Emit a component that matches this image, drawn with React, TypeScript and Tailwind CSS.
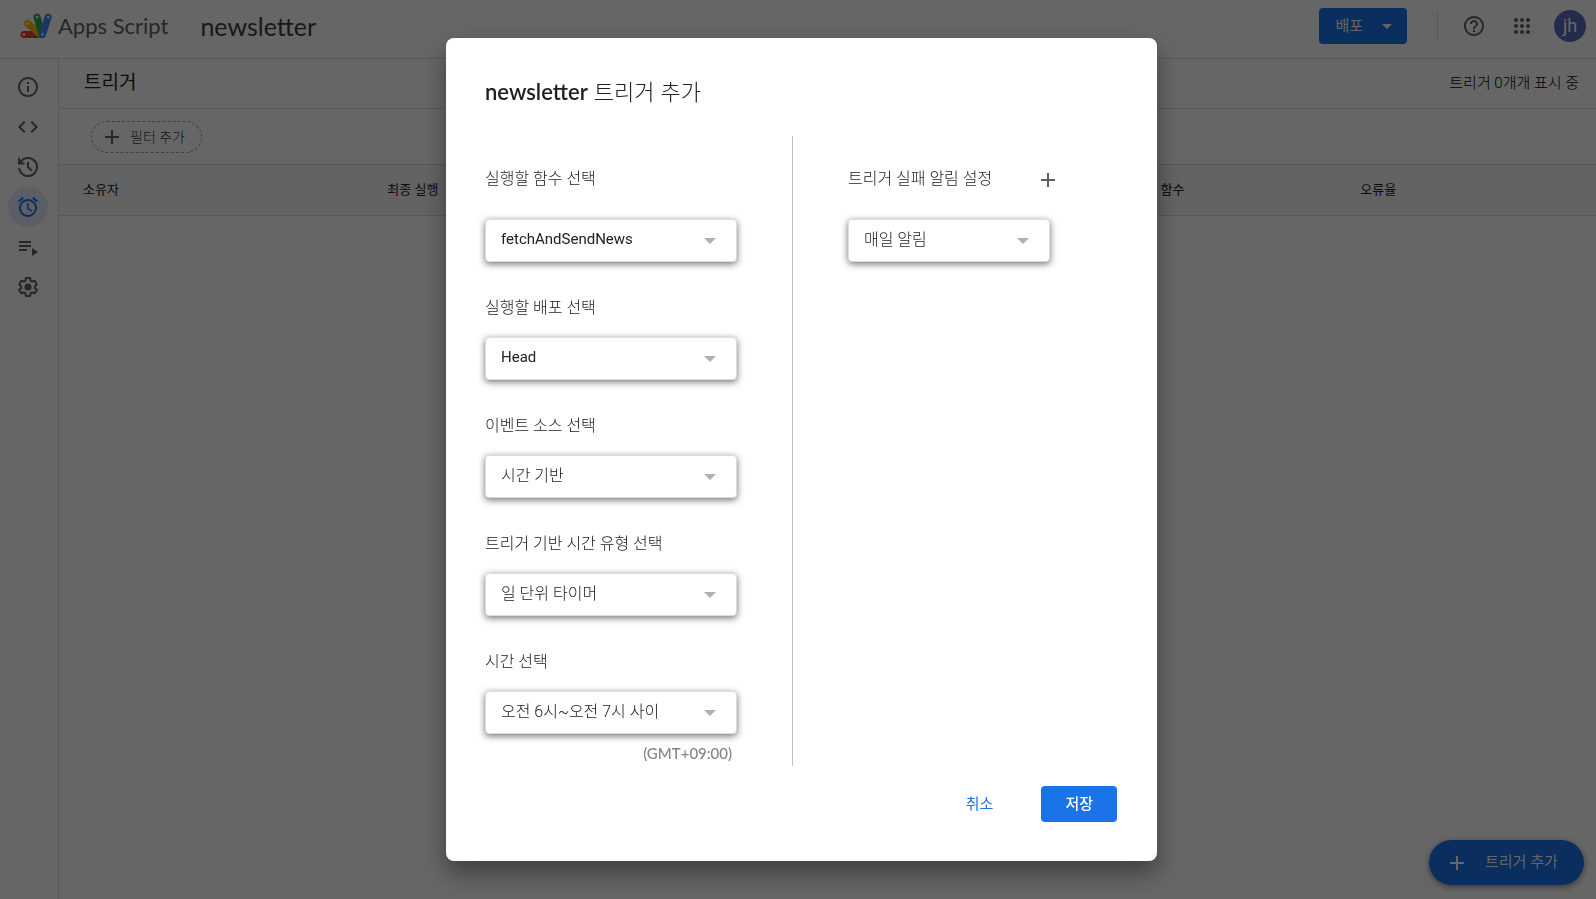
import React from 'react';
import {
  MdAdd,
  MdAlarm,
  MdArrowDropDown,
  MdCode,
  MdHelpOutline,
  MdInfoOutline,
} from 'react-icons/md';

interface SelectBoxProps {
  id: string;
  value: string;
  latin?: boolean;
}

interface SelectFieldProps extends SelectBoxProps {
  label: string;
}

const HistoryIcon: React.FC = () => (
  <svg viewBox="0 0 24 24" className="size-6" fill="none" stroke="currentColor" strokeWidth="2">
    <path d="M3.1 13.2A9 9 0 1 0 4.6 6.9" />
    <path d="M3 3v5.5h5.5" />
    <path d="M12 7v5.2l4 3.6" />
    <path d="M3 8.5 6 5.6" />
  </svg>
);

const ExecutionsIcon: React.FC = () => (
  <svg viewBox="0 0 24 24" className="size-6" fill="currentColor">
    <path d="M3 6h12v2H3zM3 10h12v2H3zM3 14h8v2H3zM16 13v8l6-4z" />
  </svg>
);

const SettingsIcon: React.FC = () => (
  <svg viewBox="0 0 24 24" className="size-6" fill="none" stroke="currentColor" strokeWidth="2.2">
    <path
      transform="translate(1.2 1.2) scale(0.9)"
      d="M19.43 12.98c.04-.32.07-.64.07-.98 0-.34-.03-.66-.07-.98l2.11-1.65c.19-.15.24-.42.12-.64l-2-3.46a.5.5 0 0 0-.61-.22l-2.49 1c-.52-.4-1.08-.73-1.69-.98l-.38-2.65A.488.488 0 0 0 14 2h-4c-.25 0-.46.18-.49.42l-.38 2.65c-.61.25-1.17.59-1.69.98l-2.49-1a.5.5 0 0 0-.61.22l-2 3.46c-.13.22-.07.49.12.64l2.11 1.65c-.04.32-.07.65-.07.98 0 .33.03.66.07.98l-2.11 1.65c-.19.15-.24.42-.12.64l2 3.46a.5.5 0 0 0 .61.22l2.49-1c.52.4 1.08.73 1.69.98l.38 2.65c.03.24.24.42.49.42h4c.25 0 .46-.18.49-.42l.38-2.65c.61-.25 1.17-.59 1.69-.98l2.49 1a.5.5 0 0 0 .61-.22l2-3.46c.12-.22.07-.49-.12-.64z"
    />
    <circle cx="12" cy="12" r="3.6" fill="currentColor" stroke="none" />
  </svg>
);

const AppsIcon: React.FC = () => (
  <svg viewBox="0 0 24 24" className="size-6" fill="currentColor">
    {[6, 12, 18].map((cy) => [6, 12, 18].map((cx) => <circle key={`${cx}-${cy}`} cx={cx} cy={cy} r="2" />))}
  </svg>
);

const Logo: React.FC = () => (
  <svg viewBox="0 0 32 26" className="w-8 h-[26px]" strokeLinecap="round" strokeWidth="7">
    <path d="M4 21.5H21" stroke="#ea4335" />
    <path d="M7.5 10.5 20 21" stroke="#fbbc04" />
    <path d="M17 4l5 17" stroke="#34a853" />
    <path d="M28.2 4 22.5 21.5" stroke="#4285f4" />
    <g fill="#fff">
      <circle cx="4" cy="21.5" r="1.3" />
      <circle cx="7.5" cy="10.5" r="1.3" />
      <circle cx="17" cy="4" r="1.3" />
      <circle cx="28.2" cy="4" r="1.3" />
      <circle cx="22.5" cy="21.5" r="1.3" />
    </g>
  </svg>
);

const navItems = [
  { label: '개요', icon: <MdInfoOutline className="size-6" /> },
  { label: '편집기', icon: <MdCode className="size-6" /> },
  { label: '기록', icon: <HistoryIcon /> },
  { label: '트리거', icon: <MdAlarm className="size-6" />, active: true },
  { label: '실행', icon: <ExecutionsIcon /> },
  { label: '설정', icon: <SettingsIcon /> },
];

const runFields: SelectFieldProps[] = [
  { id: 'deployment', label: '실행할 배포 선택', value: 'Head', latin: true },
  { id: 'source', label: '이벤트 소스 선택', value: '시간 기반' },
  { id: 'timer', label: '트리거 기반 시간 유형 선택', value: '일 단위 타이머' },
  { id: 'time', label: '시간 선택', value: '오전 6시~오전 7시 사이' },
];

const SelectBox: React.FC<SelectBoxProps> = ({ id, value, latin }) => (
  <div className="relative">
    <select
      id={id}
      className={
        'block w-full h-[43px] appearance-none rounded border border-[#dadce0] bg-white pl-[15px] pr-10 pb-0.5 text-[#202124] shadow-[0_2px_7px_rgba(60,64,67,0.75)] ' +
        (latin ? 'text-[15px] font-normal' : 'text-base font-light')
      }
    >
      <option>{value}</option>
    </select>
    <svg viewBox="0 0 12 6" className="pointer-events-none absolute right-[21px] top-[19px] w-3 h-1.5" fill="#b0b0b0">
      <path d="M0 0h12L6 6z" />
    </svg>
  </div>
);

const SelectField: React.FC<SelectFieldProps> = ({ label, ...box }) => (
  <div className="flex flex-col gap-[17px]">
    <label htmlFor={box.id} className="text-base leading-6">
      {label}
    </label>
    <SelectBox {...box} />
  </div>
);

const Header: React.FC = () => (
  <header className="flex items-center h-[59px] pl-5 pr-[10px] pb-[7px] border-b border-[#dadce0] font-['Lato','Noto_Sans_CJK_KR',sans-serif]">
    <Logo />
    <span className="ml-1.5 text-[22px] text-[#5f6368]">Apps Script</span>
    <h1 className="ml-8 text-[25px] leading-8 text-[#3c4043]">newsletter</h1>
    <button className="ml-auto flex items-center h-9 rounded bg-[#1a73e8] pl-4 pr-2 gap-3 text-[15px] text-white">
      배포
      <MdArrowDropDown className="size-6" />
    </button>
    <div className="ml-[30px] h-7 w-px bg-[#dadce0]" />
    <button aria-label="도움말" className="ml-6 text-[#5f6368]">
      <MdHelpOutline className="size-6" />
    </button>
    <button aria-label="앱" className="ml-6 text-[#5f6368]">
      <AppsIcon />
    </button>
    <button className="ml-5 size-8 rounded-full bg-[#5c6bc0] text-lg leading-8 text-white font-['Roboto',sans-serif]">
      jh
    </button>
  </header>
);

const Sidebar: React.FC = () => (
  <nav className="w-[59px] shrink-0 border-r border-[#dadce0] pl-2 pt-2">
    {navItems.map((item) => (
      <a
        key={item.label}
        href="#"
        aria-label={item.label}
        className={
          'flex size-10 items-center justify-center rounded-full ' +
          (item.active ? 'bg-[#e4ecfd] text-[#1a73e8]' : 'text-[#5f6368]')
        }
      >
        {item.icon}
      </a>
    ))}
  </nav>
);

const TriggerList: React.FC = () => (
  <main className="flex-1">
    <div className="flex items-center justify-between h-[50px] border-b border-[#dadce0] pl-[25px] pr-[17px]">
      <h2 className="text-[19px] leading-6 pb-0.5">트리거</h2>
      <span className="text-[15px] font-light text-black">트리거 0개개 표시 중</span>
    </div>
    <div className="flex items-center h-14 border-b border-[#dadce0] pl-8">
      <button className="flex items-center gap-1.5 h-8 rounded-full border border-dashed border-[#9aa0a6] pl-2 pr-4 text-sm font-light text-[#3c4043]">
        <MdAdd className="size-6 text-[#5f6368]" />
        필터 추가
      </button>
    </div>
    <table className="w-full table-fixed border-b border-[#dadce0] bg-[#f7f7f7] text-left text-[13px]">
      <thead>
        <tr className="h-[50px]">
          <th className="w-[19.8%] pl-6 font-normal">소유자</th>
          <th className="w-[50.3%] pl-6 font-normal">최종 실행</th>
          <th className="w-[13%] pl-6 font-normal">함수</th>
          <th className="pl-6 font-normal">오류율</th>
        </tr>
      </thead>
    </table>
  </main>
);

const TriggerDialog: React.FC = () => (
  <div
    role="dialog"
    aria-modal="true"
    aria-labelledby="dialog-title"
    className="w-full max-w-[711px] rounded-lg bg-white pt-10 pb-[39px] pl-[39px] pr-10 text-[#202124] shadow-[0_12px_24px_rgba(0,0,0,0.4)]"
  >
    <h2 id="dialog-title" className="text-[22px] leading-7 font-light font-['Lato','Noto_Sans_CJK_KR',sans-serif]">
      <span className="font-semibold">newsletter</span> 트리거 추가
    </h2>
    <div className="flex mt-[30px] font-light">
      <div className="flex flex-col gap-[34px] border-r border-[#bdc1c6] pt-6 pr-[55px]">
        <div className="w-[252px]">
          <label htmlFor="function" className="flex items-center h-10 mb-[19px] text-base leading-6 pb-0.5">
            실행할 함수 선택
          </label>
          <SelectBox id="function" value="fetchAndSendNews" latin />
        </div>
        {runFields.map((field) => (
          <SelectField key={field.id} {...field} />
        ))}
        <p className="-mt-7 pr-[5px] text-right text-[15px] leading-[26px] font-medium text-[#80868b] font-['Lato',sans-serif]">
          (GMT+09:00)
        </p>
      </div>
      <div className="pt-6 pl-[55px]">
        <div className="flex items-center gap-9 h-10 mb-[19px]">
          <label htmlFor="notify" className="text-base leading-6 pb-0.5">
            트리거 실패 알림 설정
          </label>
          <button aria-label="알림 추가" className="flex size-10 items-center justify-center text-[#5f6368]">
            <MdAdd className="size-6" />
          </button>
        </div>
        <div className="w-[202px]">
          <SelectBox id="notify" value="매일 알림" />
        </div>
      </div>
    </div>
    <div className="flex justify-end gap-6 mt-5 text-[15px]">
      <button className="h-9 px-6 rounded text-[#1a73e8]">취소</button>
      <button className="h-9 px-6 rounded bg-[#1a73e8] font-medium text-white">저장</button>
    </div>
  </div>
);

export default function App() {
  return (
    <div className="flex flex-col min-h-screen bg-white text-[#202124] font-['Roboto','Noto_Sans_CJK_KR',sans-serif]">
      <Header />
      <div className="flex flex-1">
        <Sidebar />
        <TriggerList />
      </div>
      <button className="fixed right-3 bottom-[14px] flex items-center gap-4 h-[45px] rounded-full bg-[#1a73e8] pl-4 pr-[26px] text-[15px] text-white shadow-[0_2px_6px_rgba(60,64,67,0.6)]">
        <MdAdd className="size-6" />
        트리거 추가
      </button>
      <div className="fixed inset-0 flex items-center justify-center bg-black/60 pl-[7px]">
        <TriggerDialog />
      </div>
    </div>
  );
}
